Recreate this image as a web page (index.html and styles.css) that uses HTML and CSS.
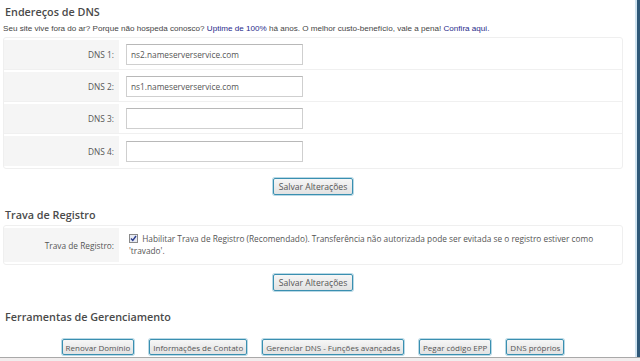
FILE: index.html
```html
<!DOCTYPE html>
<html lang="pt-BR">
<head>
    <meta charset="UTF-8">
    <title>Gerenciar Domínio</title>
    <link rel="stylesheet" href="styles.css">
</head>
<body>

    <div class="page">
        <div class="content">

            <h2>Endereços de DNS</h2>
            <p class="intro">Seu site vive fora do ar? Porque não hospeda conosco? <a href="#">Uptime de 100%</a> há anos. O melhor custo-benefício, vale a pena! <a href="#">Confira aqui.</a></p>

            <table class="frame">
                <tr>
                    <td class="label">DNS 1:</td>
                    <td class="field"><input type="text" value="ns2.nameserverservice.com"></td>
                </tr>
                <tr>
                    <td class="label">DNS 2:</td>
                    <td class="field"><input type="text" value="ns1.nameserverservice.com"></td>
                </tr>
                <tr>
                    <td class="label">DNS 3:</td>
                    <td class="field"><input type="text" value=""></td>
                </tr>
                <tr>
                    <td class="label">DNS 4:</td>
                    <td class="field"><input type="text" value=""></td>
                </tr>
            </table>

            <div class="actions">
                <button class="btn wide">Salvar Alterações</button>
            </div>

            <h2>Trava de Registro</h2>

            <table class="frame">
                <tr class="tall">
                    <td class="label">Trava de Registro:</td>
                    <td class="field text"><svg class="check" width="9" height="9" viewBox="0 0 9 9"><rect x="0.5" y="0.5" width="8" height="8" fill="#e8ebf3" stroke="#8a8a8a"/><path d="M2 4.5 L3.8 6.5 L7 2" fill="none" stroke="#2a3c8c" stroke-width="1.4"/></svg> Habilitar Trava de Registro (Recomendado). Transferência não autorizada pode ser evitada se o registro estiver como 'travado'.</td>
                </tr>
            </table>

            <div class="actions">
                <button class="btn wide">Salvar Alterações</button>
            </div>

            <h2 class="spaced">Ferramentas de Gerenciamento</h2>

            <div class="tools">
                <button class="btn">Renovar Domínio</button>
                <button class="btn">Informações de Contato</button>
                <button class="btn">Gerenciar DNS - Funções avançadas</button>
                <button class="btn">Pegar código EPP</button>
                <button class="btn">DNS próprios</button>
            </div>
        </div>

        <!-- barra lateral azul -->
        <div class="side"></div>
    </div>

    <div class="bottom-bar"></div>

</body>
</html>
```

FILE: styles.css
```css
* {
    margin: 0;
    padding: 0;
    box-sizing: border-box;
}

body {
    font-family: "Open Sans", Arial, sans-serif;
    background: #fff;
    color: #555;
    width: 640px;
    height: 361px;
    overflow: hidden;
}

.page {
    display: flex;
    height: 357px;
}

.content {
    flex: 1;
    padding: 2px 12px 0 3px;
}

.side {
    width: 5px;
    border-left: 2px solid #cfe3f0;
    background: #2f5878;
}

h2 {
    font-size: 10.8px;
    font-weight: 600;
    color: #4a4a4a;
    padding-left: 2px;
    height: 20px;
    line-height: 20px;
}

h2.spaced {
    margin-top: 6px;
}

.intro {
    font-family: "Liberation Sans", Arial, sans-serif;
    font-size: 8.1px;
    color: #444;
    margin-top: 2px;
    height: 13px;
}

.intro a {
    color: #1f2a8a;
    text-decoration: none;
}

/* Tabelas */
.frame {
    width: 100%;
    border-collapse: separate;
    border-spacing: 0 2px;
    border: 1px solid #efefef;
    border-radius: 3px;
    font-size: 8.3px;
}

.frame td {
    height: 30px;
    border-bottom: 1px solid #f0f0f0;
}

.frame tr:last-child td {
    border-bottom: none;
}

.frame .tall td {
    height: 34px;
}

.label {
    width: 115px;
    background: #f5f5f5;
    text-align: right;
    padding-right: 5px;
    color: #555;
}

.field {
    padding-left: 7px;
}

.field.text {
    padding-left: 10px;
    color: #555;
    line-height: 12px;
}

input {
    width: 177px;
    height: 21px;
    border: 1px solid #cfcfcf;
    border-top-color: #b8b8b8;
    font-family: "Open Sans", Arial, sans-serif;
    font-size: 8.3px;
    color: #555;
    padding: 0 4px;
}

.check {
    vertical-align: -1px;
    margin-right: 2px;
}

/* Botões */
.actions {
    display: flex;
    justify-content: center;
    padding: 9px 0 10px;
}

.btn {
    font-family: "Open Sans", Arial, sans-serif;
    font-size: 8px;
    color: #555;
    background: linear-gradient(#f6f6f6, #e2e2e2);
    border: 1px solid #3a8fb0;
    box-shadow: 0 0 0 1px #b9d9e6;
    border-radius: 2px;
    height: 16px;
    padding: 0 3px;
}

.btn.wide {
    font-size: 8.6px;
    padding: 0 5px;
    height: 17px;
}

.tools {
    display: flex;
    justify-content: center;
    gap: 15px;
    padding-top: 12px;
}

.bottom-bar {
    height: 4px;
    border-top: 1px solid #a9a9a9;
    background: #f1eded;
}
```
